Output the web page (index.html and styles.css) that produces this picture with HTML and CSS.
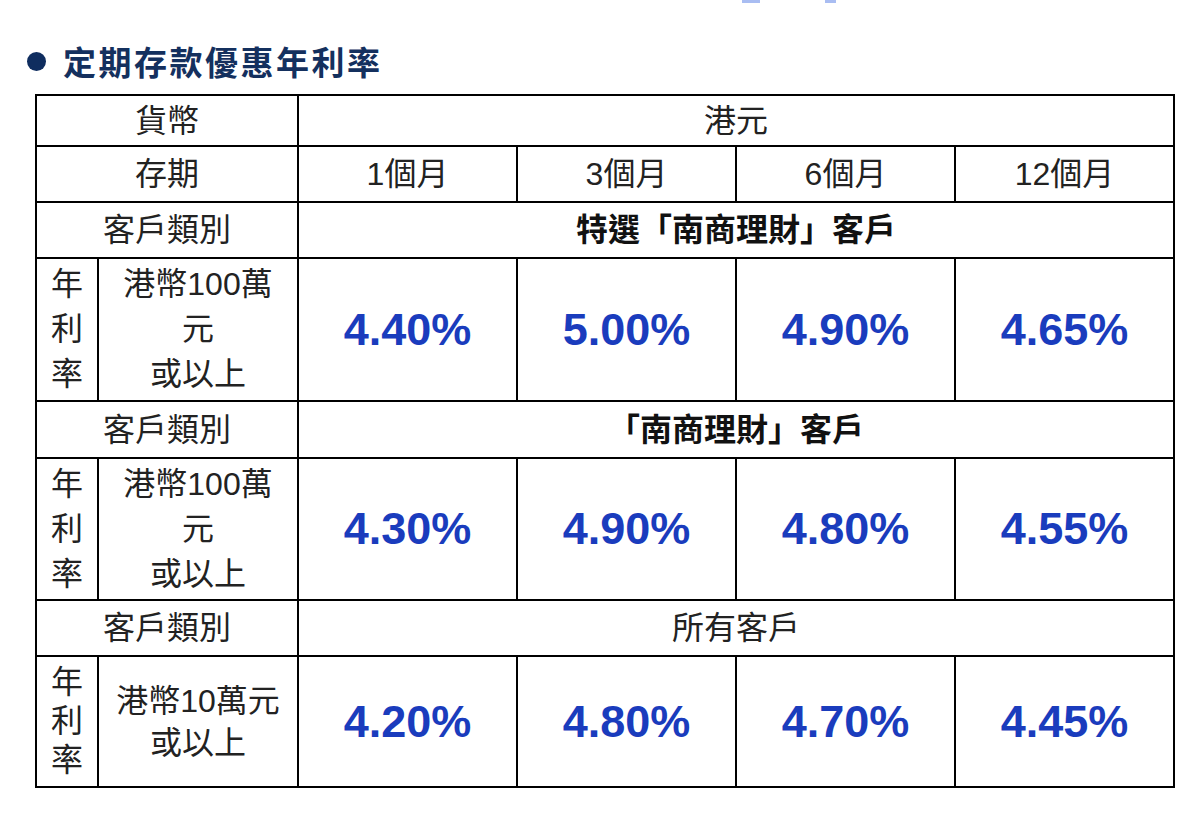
FILE: index.html
```html
<!DOCTYPE html>
<html lang="zh-Hant">
<head>
<meta charset="utf-8">
<title>定期存款優惠年利率</title>
<link rel="stylesheet" href="styles.css">
</head>
<body>
<div class="topbar"><span class="mark mark-a"></span><span class="mark mark-b"></span></div>
<h2 class="heading"><span class="dot"></span>定期存款優惠年利率</h2>
<table class="rates">
  <colgroup>
    <col class="c-yr"><col class="c-amt"><col class="c-p"><col class="c-p"><col class="c-p"><col class="c-p">
  </colgroup>
  <tr class="r-head1"><td colspan="2">貨幣</td><td colspan="4">港元</td></tr>
  <tr class="r-head"><td colspan="2">存期</td><td>1個月</td><td>3個月</td><td>6個月</td><td>12個月</td></tr>
  <tr class="r-head"><td colspan="2">客戶類別</td><td colspan="4" class="b">特選「南商理財」客戶</td></tr>
  <tr class="r-rate1">
    <td class="yr">年<br>利<br>率</td>
    <td class="amt">港幣100萬<br>元<br>或以上</td>
    <td class="pct">4.40%</td><td class="pct">5.00%</td><td class="pct">4.90%</td><td class="pct">4.65%</td>
  </tr>
  <tr class="r-head r-mid"><td colspan="2">客戶類別</td><td colspan="4" class="b">「南商理財」客戶</td></tr>
  <tr class="r-rate2">
    <td class="yr">年<br>利<br>率</td>
    <td class="amt">港幣100萬<br>元<br>或以上</td>
    <td class="pct">4.30%</td><td class="pct">4.90%</td><td class="pct">4.80%</td><td class="pct">4.55%</td>
  </tr>
  <tr class="r-head"><td colspan="2">客戶類別</td><td colspan="4">所有客戶</td></tr>
  <tr class="r-rate3">
    <td class="yr">年<br>利<br>率</td>
    <td class="amt">港幣10萬元<br>或以上</td>
    <td class="pct">4.20%</td><td class="pct">4.80%</td><td class="pct">4.70%</td><td class="pct">4.45%</td>
  </tr>
</table>
</body>
</html>
```
FILE: styles.css
```css
html, body {
  margin: 0;
  padding: 0;
  background: #ffffff;
}
body {
  font-family: "Liberation Sans", "Noto Sans CJK TC", sans-serif;
  color: #222;
}
.topbar {
  display: flex;
  height: 4px;
  padding-left: 742px;
  gap: 65px;
}
.mark {
  display: block;
  height: 3px;
  background: #a9bdf2;
}
.mark-a { width: 18px; }
.mark-b { width: 11px; }

.heading {
  display: flex;
  align-items: center;
  gap: 17px;
  margin: 37px 0 0 0;
  padding-left: 27px;
  height: 40px;
  font-family: "Noto Sans CJK TC", sans-serif;
  font-size: 33px;
  font-weight: 700;
  letter-spacing: 2.5px;
  color: #14305e;
  line-height: 40px;
}
.dot {
  width: 19px;
  height: 19px;
  border-radius: 50%;
  background: #0f2d5f;
  flex: none;
}

.rates {
  margin: 13px 0 0 35px;
  width: 1140px;
  table-layout: fixed;
  border-collapse: collapse;
  font-size: 32px;
}
.c-yr { width: 62px; }
.c-amt { width: 200px; }
.c-p { width: 219px; }
.rates td {
  border: 2px solid #000;
  text-align: center;
  vertical-align: middle;
  padding: 0;
  line-height: 40px;
}
.r-head1 { height: 51px; }
.r-head { height: 56px; }
.r-mid { height: 57px; }
.r-rate1 { height: 143px; }
.r-rate2 { height: 142px; }
.r-rate3 { height: 131px; }
.b { font-weight: 700; color: #111; }
.yr, .amt { line-height: 45px !important; }
.r-rate3 .yr { line-height: 39px !important; }
.r-rate3 .amt { line-height: 42px !important; }
.pct {
  font-size: 45px;
  font-weight: 700;
  color: #1a3cbd;
}
```
